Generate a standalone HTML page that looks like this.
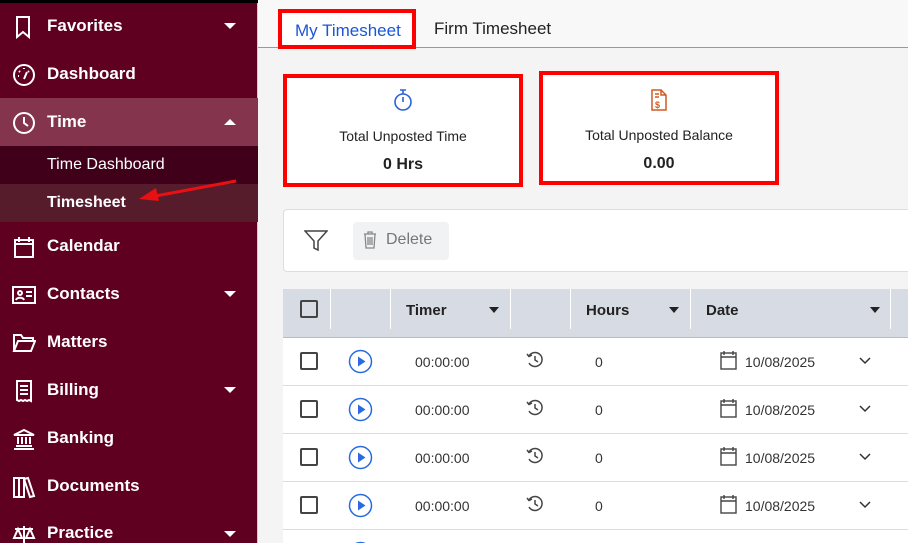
<!DOCTYPE html>
<html style="width:908px;height:543px;overflow:hidden"><head><meta charset="utf-8"><style>
*{box-sizing:border-box;margin:0;padding:0}
html,body{width:908px;height:543px;overflow:hidden}
body{background:#f4f4f4;font-family:"Liberation Sans",sans-serif}
#wrap{position:relative;width:908px;height:543px;overflow:hidden}
.sb{position:absolute;left:0;top:0;width:258px;height:543px;background:#5f0020;border-right:1px solid #ccc}
.it{position:absolute;left:0;width:258px;height:48px;color:#fff;font-weight:bold;font-size:17px;display:flex;align-items:center}
.it .ic{position:absolute;left:12px;top:13px;width:24px;height:24px}
.it span{position:absolute;left:47px}
.car{position:absolute;left:224px;width:0;height:0;border-left:6px solid transparent;border-right:6px solid transparent;border-top:6px solid #fff}
.up{border-top:none;border-bottom:6px solid #fff}
.sub{position:absolute;left:0;width:258px;height:38px;color:#fff;font-size:16px}
.sub span{position:absolute;left:47px;top:10px}
.abs{position:absolute}
.card{position:absolute;background:#fff;border:4px solid #f00;text-align:center;color:#222}
.cell{position:absolute;font-size:14px;color:#333}
.hl{position:absolute;top:289px;width:1px;height:40px;background:#fff}
</style></head><body><div id="wrap">
<div class="sb">
 <div style="position:absolute;top:0;left:0;width:258px;height:3px;background:#000"></div>
 <div class="it" style="top:2px"><svg class="ic" viewBox="0 0 24 24" fill="none" stroke="#fff" stroke-width="2"><path d="M5 2h12v20l-6-5-6 5z"/></svg><span>Favorites</span><div class="car" style="top:21px"></div></div>
 <div class="it" style="top:50px"><svg class="ic" viewBox="0 0 24 24" fill="none" stroke="#fff" stroke-width="2"><circle cx="12" cy="12" r="10"/><path d="M12 16l3-7M7 8l1 1M12 5v1M17 8l-1 1M6 13h1"/></svg><span>Dashboard</span></div>
 <div class="it" style="top:98px;background:#84344c"><svg class="ic" viewBox="0 0 24 24" fill="none" stroke="#fff" stroke-width="2"><circle cx="12" cy="12" r="10"/><path d="M12 6v6l4 3"/></svg><span>Time</span><div class="car up" style="top:21px"></div></div>
 <div class="sub" style="top:146px;background:#40001a"><span>Time Dashboard</span></div>
 <div class="sub" style="top:184px;background:#561c2c;font-weight:bold"><span>Timesheet</span></div>
 <div class="it" style="top:222px"><svg class="ic" viewBox="0 0 24 24" fill="none" stroke="#fff" stroke-width="2"><rect x="3" y="5" width="18" height="17"/><path d="M3 9h18M7 2v5M17 2v5"/></svg><span>Calendar</span></div>
 <div class="it" style="top:270px"><svg class="ic" viewBox="0 0 24 24" fill="none" stroke="#fff" stroke-width="2"><rect x="1" y="4" width="22" height="16"/><circle cx="8" cy="10" r="2"/><path d="M4 17c1-3 7-3 8 0M14 9h6M14 13h6"/></svg><span>Contacts</span><div class="car" style="top:21px"></div></div>
 <div class="it" style="top:318px"><svg class="ic" viewBox="0 0 24 24" fill="none" stroke="#fff" stroke-width="2"><path d="M2 20V4h7l2 3h10v3M2 20l4-10h17l-4 10z"/></svg><span>Matters</span></div>
 <div class="it" style="top:366px"><svg class="ic" viewBox="0 0 24 24" fill="none" stroke="#fff" stroke-width="2"><path d="M5 2h14v20l-2-1-2 1-2-1-2 1-2-1-2 1-2-1zM8 7h8M8 11h8M8 15h8"/></svg><span>Billing</span><div class="car" style="top:21px"></div></div>
 <div class="it" style="top:414px"><svg class="ic" viewBox="0 0 24 24" fill="none" stroke="#fff" stroke-width="2"><path d="M2 8l10-5 10 5zM4 19h16M2 22h20M6 10v7M10 10v7M14 10v7M18 10v7"/></svg><span>Banking</span></div>
 <div class="it" style="top:462px"><svg class="ic" viewBox="0 0 24 24" fill="none" stroke="#fff" stroke-width="2"><path d="M2 3h5v19H2zM7 3h5v19H7zM12 4l4-1 6 18-4 1z"/></svg><span>Documents</span></div>
 <div class="it" style="top:495px;height:48px;overflow:hidden"><svg class="ic" style="top:28px" viewBox="0 0 24 24" fill="none" stroke="#fff" stroke-width="2"><path d="M12 3v19M3 6h18M6 6l-4 9h8zM18 6l-4 9h8zM8 22h8"/></svg><span style="top:28px">Practice</span><div class="car" style="top:36px"></div></div>
</div>
<div class="abs" style="left:258px;top:0;width:650px;height:48px;background:#f8f8f8;border-bottom:1px solid #999"></div>
<div class="abs" style="left:278px;top:9px;width:138px;height:40px;background:#fff;border:4px solid #f00;color:#1a56d6;font-size:17px;padding:8px 0 0 13px">My Timesheet</div>
<div class="abs" style="left:434px;top:19px;font-size:17px;color:#222">Firm Timesheet</div>
<div class="card" style="left:283px;top:74px;width:240px;height:113px">
 <svg style="margin-top:10px" width="22" height="24" viewBox="0 0 22 24" fill="none" stroke="#2a62d8" stroke-width="1.6"><circle cx="11" cy="14" r="8"/><path d="M11 14V9M8 2h6M11 2v4"/></svg>
 <div style="font-size:14px;margin-top:11px">Total Unposted Time</div>
 <div style="font-size:16px;font-weight:bold;margin-top:12px">0 Hrs</div>
</div>
<div class="card" style="left:539px;top:71px;width:240px;height:114px">
 <svg style="margin-top:13px" width="18" height="24" viewBox="0 0 18 24" fill="none" stroke="#d25a20" stroke-width="1.5"><path d="M2 2h9l5 5v15H2zM11 2v5h5M5 6h4M5 9h4"/><text x="5" y="20" font-size="9" fill="#d25a20" stroke="none" font-weight="bold">$</text></svg>
 <div style="font-size:14px;margin-top:10px">Total Unposted Balance</div>
 <div style="font-size:16px;font-weight:bold;margin-top:12px">0.00</div>
</div>
<div class="abs" style="left:283px;top:209px;width:625px;height:63px;background:#fff;border:1px solid #ddd;border-right:none;border-radius:4px 0 0 4px"></div>
<svg class="abs" style="left:304px;top:230px" width="24" height="22" viewBox="0 0 24 22" fill="none" stroke="#444" stroke-width="1.5"><path d="M1 1h22l-9 10v9l-4-2v-7z"/></svg>
<div class="abs" style="left:353px;top:222px;width:96px;height:38px;background:#f1f2f4;border-radius:4px;color:#777;font-size:16px;padding:9px 0 0 33px">Delete</div>
<svg class="abs" style="left:363px;top:231px" width="14" height="18" viewBox="0 0 14 18" fill="none" stroke="#888" stroke-width="1.3"><path d="M1 3h12M5 3V1h4v2M2 3l1 14h8l1-14M5 6v8M7 6v8M9 6v8"/></svg>
<div class="abs" style="left:283px;top:289px;width:625px;height:254px;background:#fff"></div>
<div class="abs" style="left:283px;top:289px;width:625px;height:49px;background:#d6dbe4;border-bottom:1px solid #bbb"></div>
<div class="hl" style="left:330px"></div><div class="hl" style="left:390px"></div><div class="hl" style="left:510px"></div><div class="hl" style="left:570px"></div><div class="hl" style="left:690px"></div><div class="hl" style="left:890px"></div>
<div class="abs" style="left:300px;top:300px;width:18px;height:18px;border:2px solid #444;border-radius:2px"></div>
<div class="cell" style="left:406px;top:302px;font-weight:bold;color:#222;font-size:15px">Timer</div>
<div class="cell" style="left:586px;top:302px;font-weight:bold;color:#222;font-size:15px">Hours</div>
<div class="cell" style="left:706px;top:302px;font-weight:bold;color:#222;font-size:15px">Date</div>
<div class="car" style="left:489px;top:307px;border-top-color:#222;border-width:6px 5px 0"></div>
<div class="car" style="left:669px;top:307px;border-top-color:#222;border-width:6px 5px 0"></div>
<div class="car" style="left:870px;top:307px;border-top-color:#222;border-width:6px 5px 0"></div>
<div id="rows"></div>
<svg class="abs" style="left:348px;top:541px" width="25" height="2" viewBox="0 0 25 2"><circle cx="12.5" cy="12.5" r="11" fill="none" stroke="#2a6ae0" stroke-width="1.5"/></svg>
<svg class="abs" style="left:136px;top:175px" width="104" height="30" viewBox="0 0 104 30"><path d="M100 6L14 22" stroke="#e81010" stroke-width="3"/><path d="M3 24l17-11 3 13z" fill="#e81010"/></svg>
</div>
<script>
var h='';[338,386,434,482].forEach(function(y){
h+='<div class="abs" style="left:283px;top:'+(y+47)+'px;width:625px;height:1px;background:#ddd"></div>'+
'<div class="abs" style="left:300px;top:'+(y+14)+'px;width:18px;height:18px;border:2px solid #444;border-radius:2px"></div>'+
'<svg class="abs" style="left:348px;top:'+(y+11)+'px" width="25" height="25" viewBox="0 0 25 25"><circle cx="12.5" cy="12.5" r="11" fill="none" stroke="#2a6ae0" stroke-width="1.5"/><path d="M10 7.5v10l7.5-5z" fill="#2a6ae0"/></svg>'+
'<div class="cell" style="left:415px;top:'+(y+16)+'px">00:00:00</div>'+
'<svg class="abs" style="left:526px;top:'+(y+13)+'px" width="18" height="18" viewBox="0 0 18 18" fill="none" stroke="#444" stroke-width="1.5"><path d="M3 5A7 7 0 1 1 3 12M1 3l2 2.5L6 4M9 5v4l3 2"/></svg>'+
'<div class="cell" style="left:595px;top:'+(y+16)+'px">0</div>'+
'<svg class="abs" style="left:720px;top:'+(y+12)+'px" width="17" height="20" viewBox="0 0 17 20" fill="none" stroke="#444" stroke-width="1.4"><rect x="1" y="3" width="15" height="16"/><path d="M1 7h15M4 1v4M13 1v4"/></svg>'+
'<div class="cell" style="left:745px;top:'+(y+16)+'px">10/08/2025</div>'+
'<svg class="abs" style="left:859px;top:'+(y+19)+'px" width="12" height="8" viewBox="0 0 12 8" fill="none" stroke="#333" stroke-width="1.5"><path d="M1 1l5 5 5-5"/></svg>';});
document.getElementById('rows').innerHTML=h;
</script>
</body></html>
